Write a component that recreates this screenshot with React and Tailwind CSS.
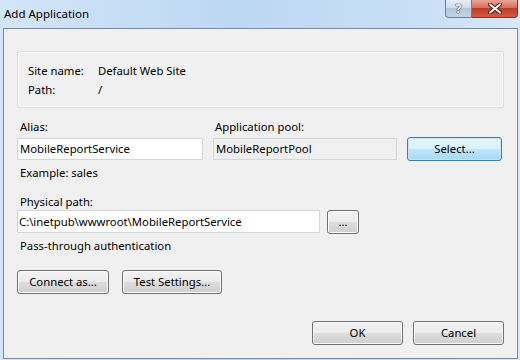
import React from "react";

const font = { fontFamily: '"Segoe UI", "Noto Sans", sans-serif' };

const Btn = ({ children, className = "", focused = false }) => (
  <button
    className={`h-[24px] rounded-[3px] border text-[11.3px] text-black flex items-center justify-center ${
      focused
        ? "border-[#3c7fb1] bg-[linear-gradient(#eaf6fd_0%,#d9f0fc_50%,#bee6fd_50%,#a7d9f5_100%)] shadow-[inset_0_0_0_1px_#c4e5f6]"
        : "border-[#707070] bg-[linear-gradient(#f2f2f2_0%,#ebebeb_50%,#dddddd_50%,#cfcfcf_100%)] shadow-[inset_0_0_0_1px_#fbfbfb]"
    } ${className}`}
  >
    {children}
  </button>
);

export default function App() {
  return (
    <div
      className="w-[520px] h-[360px] flex flex-col bg-[linear-gradient(90deg,#d3e5f8_0%,#bcd7f3_45%,#c6ddf5_75%,#d6e8f9_100%)] text-black overflow-hidden"
      style={font}
    >
      {/* Title bar */}
      <div className="h-[28px] flex items-start justify-between shrink-0">
        <div className="pl-[4px] pt-[5px] text-[11.5px] leading-[18px]">Add Application</div>
        <div className="flex mr-[2px]">
          <div className="w-[27px] h-[18px] rounded-bl-[4px] border border-t-0 border-[#6d7f93] bg-[linear-gradient(#e4edf7_0%,#cfdceb_50%,#b3c6da_50%,#c2d4e6_100%)] flex items-center justify-center">
            <span className="text-[13px] font-bold leading-none text-white [text-shadow:0_0_1px_#2c3e55,0_0_1px_#2c3e55,0_0_1px_#2c3e55]">?</span>
          </div>
          <div className="w-[46px] h-[18px] rounded-br-[4px] border border-l-0 border-t-0 border-[#6d3a33] bg-[linear-gradient(#eba597_0%,#d66e5a_45%,#c23a24_50%,#d35a43_100%)] flex items-center justify-center">
            <svg width="14" height="11" viewBox="0 0 14 11">
              <path d="M2 1.5 L12 9.5 M12 1.5 L2 9.5" stroke="#4a1a14" strokeWidth="4" strokeLinecap="round" />
              <path d="M2 1.5 L12 9.5 M12 1.5 L2 9.5" stroke="#ffffff" strokeWidth="2.2" strokeLinecap="round" />
            </svg>
          </div>
        </div>
      </div>

      {/* Client area */}
      <div className="flex-1 ml-[3px] mr-[2px] mb-[1px] border border-[#7a8a9b] bg-[#f0f0f0] flex flex-col pl-[13px] pt-[22px] text-[11.3px] leading-[16px]">
        {/* Group box */}
        <div className="w-[487px] h-[57px] rounded-[3px] border border-[#d5dfe5] shadow-[inset_0_0_0_1px_#fdfdfd] pl-[10px] pt-[9px] flex flex-col">
          <div className="flex leading-[19px]">
            <span className="w-[70px]">Site name:</span>
            <span>Default Web Site</span>
          </div>
          <div className="flex leading-[19px]">
            <span className="w-[70px]">Path:</span>
            <span>/</span>
          </div>
        </div>

        {/* Labels */}
        <div className="flex mt-[11px]">
          <span className="w-[196px] pl-[3px]">Alias:</span>
          <span className="pl-[2px]">Application pool:</span>
        </div>

        {/* Inputs */}
        <div className="flex items-start mt-[3px]">
          <div className="w-[186px] h-[22px] border border-[#d3d7dc] bg-white pl-[2px] flex items-center">MobileReportService</div>
          <div className="w-[184px] h-[22px] ml-[10px] border border-[#d3d7dc] bg-[#f0f0f0] pl-[2px] flex items-center">MobileReportPool</div>
          <Btn focused className="w-[95px] ml-[10px] -mt-px">Select...</Btn>
        </div>

        <div className="mt-[4px] pl-[3px]">Example: sales</div>

        <div className="mt-[13px] pl-[3px]">Physical path:</div>
        <div className="flex items-start">
          <div className="w-[303px] h-[23px] border border-[#d3d7dc] bg-white pl-[1px] flex items-center">
            C:\inetpub\wwwroot\MobileReportService
          </div>
          <Btn className="w-[32px] ml-[7px]">...</Btn>
        </div>

        <div className="mt-[4px] pl-[3px]">Pass-through authentication</div>

        <div className="flex mt-[16px]">
          <Btn className="w-[92px]">Connect as...</Btn>
          <Btn className="w-[100px] ml-[13px]">Test Settings...</Btn>
        </div>

        <div className="flex mt-[27px] pl-[295px]">
          <Btn className="w-[91px]">OK</Btn>
          <Btn className="w-[91px] ml-[10px]">Cancel</Btn>
        </div>
      </div>
    </div>
  );
}
